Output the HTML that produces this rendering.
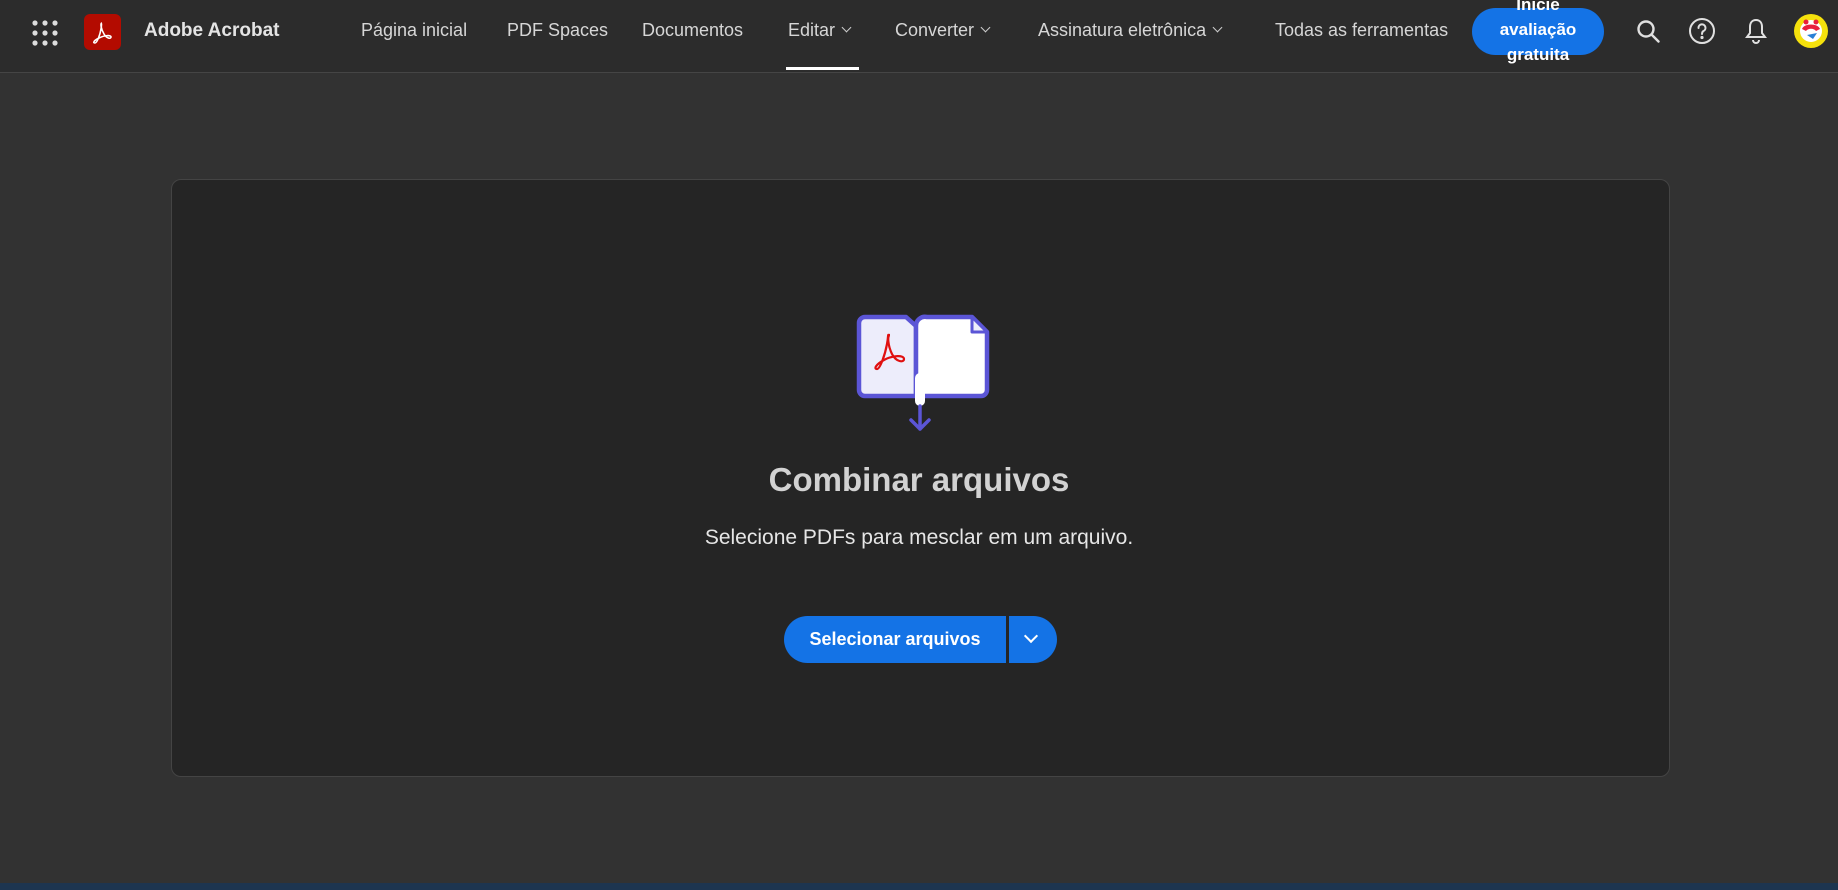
<!DOCTYPE html>
<html><head><meta charset="utf-8"><style>
*{margin:0;padding:0;box-sizing:border-box}
body{width:1838px;height:890px;background:#323232;font-family:"Liberation Sans",sans-serif;position:relative;overflow:hidden;color:#dcdcdc}
.hdr{position:absolute;left:0;top:0;width:1838px;height:73px;background:#2c2c2c;border-bottom:1px solid #454545}
.a{position:absolute;white-space:nowrap}
.nav{font-size:18px;color:#d6d6d6;top:20px}
.chev{display:inline-block;width:7px;height:7px;border-right:1.5px solid #ccc;border-bottom:1.5px solid #ccc;transform:rotate(45deg);margin-left:8px;position:relative;top:-5px}
.card{position:absolute;left:171px;top:179px;width:1499px;height:598px;background:#252525;border:1px solid #444;border-radius:10px}
</style></head><body>
<div class="hdr"></div>
<svg class="a" style="left:32px;top:20px" width="26" height="26" viewBox="0 0 26 26" fill="#ddd"><circle cx="3" cy="3" r="2.6"/><circle cx="13" cy="3" r="2.6"/><circle cx="23" cy="3" r="2.6"/><circle cx="3" cy="13" r="2.6"/><circle cx="13" cy="13" r="2.6"/><circle cx="23" cy="13" r="2.6"/><circle cx="3" cy="23" r="2.6"/><circle cx="13" cy="23" r="2.6"/><circle cx="23" cy="23" r="2.6"/></svg>
<div class="a" style="left:84px;top:14px;width:37px;height:36px;background:#b30b00;border-radius:6px"></div>
<svg class="a" style="left:90px;top:20px" width="25" height="24" viewBox="0 0 25 24"><path d="M12 3c-2 0-1 6 2 11s7 5 7 3-6-2-12 1-6 5-4 5 5-8 6-14 0-6 1-6z" fill="none" stroke="#fff" stroke-width="1.6"/></svg>
<div class="a" style="left:144px;top:20px;font-size:19px;font-weight:bold;color:#e4e4e4">Adobe Acrobat</div>
<div class="a nav" style="left:361px">Página inicial</div>
<div class="a nav" style="left:507px">PDF Spaces</div>
<div class="a nav" style="left:642px">Documentos</div>
<div class="a nav" style="left:788px">Editar<span class="chev"></span></div>
<div class="a" style="left:786px;top:67px;width:73px;height:3px;background:#fff"></div>
<div class="a nav" style="left:895px">Converter<span class="chev"></span></div>
<div class="a nav" style="left:1038px">Assinatura eletrônica<span class="chev"></span></div>
<div class="a nav" style="left:1275px">Todas as ferramentas</div>
<div class="a" style="left:1472px;top:8px;width:132px;height:47px;background:#1473e6;border-radius:24px"></div>
<div class="a" style="left:1472px;top:-8px;width:132px;text-align:center;font-size:17px;font-weight:bold;color:#fff;line-height:25px">Inicie<br>avaliação<br>gratuita</div>
<svg class="a" style="left:1636px;top:19px" width="26" height="26" viewBox="0 0 26 26" fill="none" stroke="#e0e0e0" stroke-width="2.4"><circle cx="10" cy="10" r="7.5"/><path d="M15.5 15.5l7 7" stroke-linecap="round"/></svg>
<svg class="a" style="left:1688px;top:17px" width="28" height="28" viewBox="0 0 28 28" fill="none" stroke="#e0e0e0" stroke-width="2"><circle cx="14" cy="14" r="12"/><path d="M10.5 11a3.5 3.5 0 1 1 5 3c-1.2.7-1.5 1.3-1.5 3" stroke-linecap="round"/><circle cx="14" cy="20.5" r="0.6" fill="#e0e0e0"/></svg>
<svg class="a" style="left:1744px;top:17px" width="24" height="28" viewBox="0 0 24 28" fill="none" stroke="#e0e0e0" stroke-width="2"><path d="M12 3c-4 0-6 3-6 7v6l-3 4h18l-3-4v-6c0-4-2-7-6-7z"/><path d="M9 23a3 3 0 0 0 6 0"/></svg>
<svg class="a" style="left:1793px;top:13px" width="36" height="36" viewBox="0 0 36 36"><circle cx="18" cy="18" r="17" fill="#f5e10c"/><circle cx="18" cy="18" r="11" fill="#fff"/><path d="M9 16c2-6 16-6 18 0l-4 2c-2-3-8-3-10 0z" fill="#e8203c"/><path d="M14 22l6 4 4-6" fill="#2a7fd5"/><circle cx="13" cy="9" r="2.5" fill="#e8203c"/><circle cx="23" cy="9" r="2.5" fill="#e8203c"/></svg>
<div class="card"></div>
<svg class="a" style="left:855px;top:313px" width="136" height="122" viewBox="0 0 136 122">
<path d="M10 4h41l10 9v70H10a6 6 0 0 1-6-6V10a6 6 0 0 1 6-6z" fill="#ededfb" stroke="#5b55d6" stroke-width="4.5" stroke-linejoin="round"/>
<path d="M72 4h45l15 15v58a6 6 0 0 1-6 6H61V13a9 9 0 0 1 11-9z" fill="#fff" stroke="#5b55d6" stroke-width="4.5" stroke-linejoin="round"/>
<path d="M117 4v15h15z" fill="#ededfb" stroke="#5b55d6" stroke-width="3" stroke-linejoin="round"/>
<path d="M35 22c-3 0-2 11 2 19s12 9 12 5-11-4-20 1-10 9-7 9 8-14 10-25 0-9 3-9z" fill="none" stroke="#e01010" stroke-width="2.2"/>
<rect x="60" y="60" width="10" height="33" rx="5" fill="#fff"/>
<path d="M65 93v23M56 107l9 9 9-9" fill="none" stroke="#5b55d6" stroke-width="3.5" stroke-linecap="round" stroke-linejoin="round"/>
</svg>
<div class="a" style="left:0;width:1838px;top:461px;text-align:center;font-size:33px;font-weight:bold;color:#d2d2d2">Combinar arquivos</div>
<div class="a" style="left:0;width:1838px;top:526px;text-align:center;font-size:21px;color:#e6e6e6">Selecione PDFs para mesclar em um arquivo.</div>
<div class="a" style="left:784px;top:616px;width:222px;height:47px;background:#1473e6;border-radius:24px 0 0 24px;color:#fff;font-weight:bold;font-size:18px;text-align:center;line-height:47px">Selecionar arquivos</div>
<div class="a" style="left:1009px;top:616px;width:48px;height:47px;background:#1473e6;border-radius:0 24px 24px 0"></div>
<div class="a" style="left:1026px;top:631px;width:10px;height:10px;border-right:2.5px solid #fff;border-bottom:2.5px solid #fff;transform:rotate(45deg)"></div>
<div class="a" style="left:0;top:883px;width:1838px;height:7px;background:#1d3550"></div>
</body></html>
